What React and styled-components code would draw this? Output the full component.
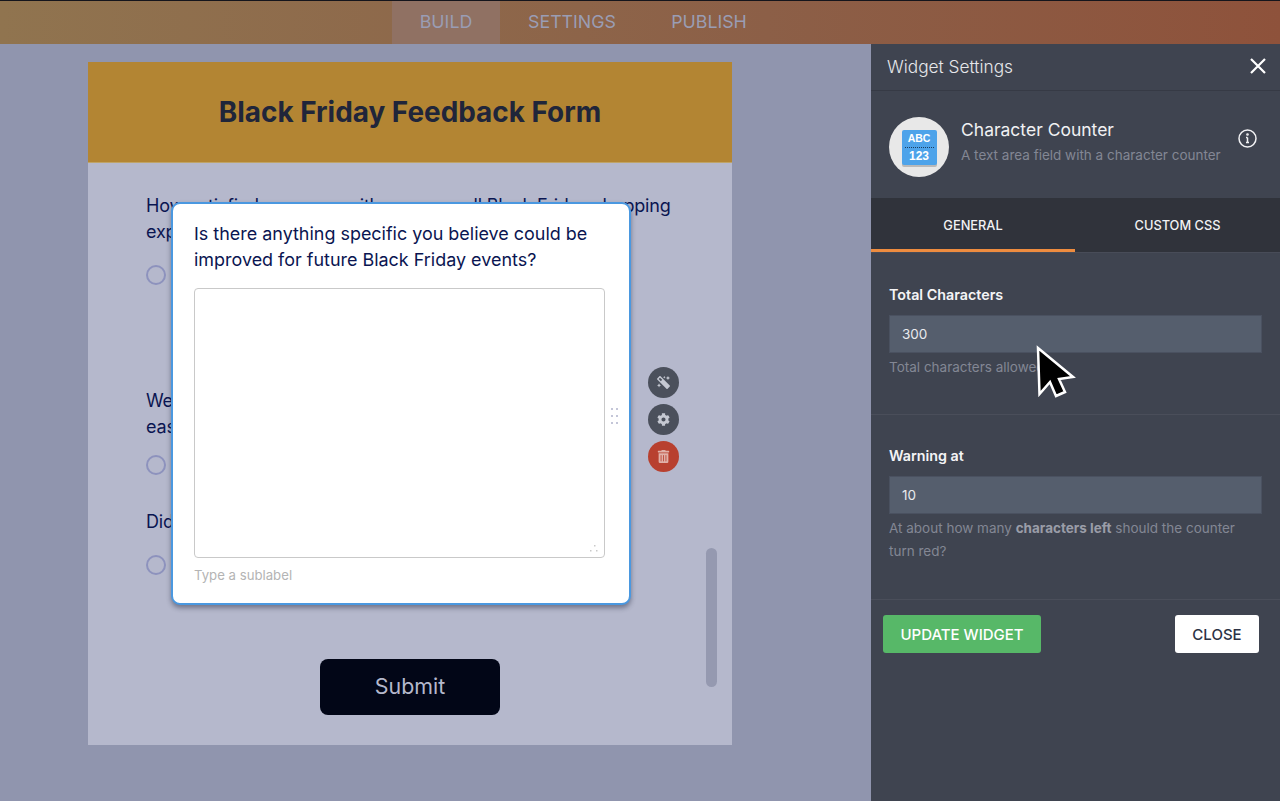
import React from "react";
import styled, { createGlobalStyle } from "styled-components";
import { FaMagic, FaCog, FaTrashAlt } from "react-icons/fa";

const GlobalStyle = createGlobalStyle`
  html, body {
    margin: 0;
    padding: 0;
    height: 100%;
    overflow: hidden;
    background: #9095ae;
    font-family: "Inter", "Liberation Sans", sans-serif;
  }
  * { box-sizing: border-box; }
`;

const questions = [
  {
    text: "How satisfied were you with your overall Black Friday shopping experience?",
    width: 527,
    radioGap: 20,
    gap: 103,
  },
  {
    text: "Were you able to find the items you wanted quickly and easily?",
    width: 480,
    radioGap: 15,
    gap: 34,
  },
  { text: "Did you use any discount codes?", width: 527, radioGap: 20, gap: 0 },
];

const Page = styled.div`
  width: 1280px;
  height: 801px;
  display: flex;
  flex-direction: column;
`;

const TopBar = styled.header`
  height: 44px;
  flex: none;
  padding-left: 392px;
  border-top: 1px solid #15151c;
  background: linear-gradient(90deg, #90744f 0%, #8c5f47 60%, #8e523b 100%);
  display: flex;
`;

const NavTab = styled.div`
  width: ${(p) => p.$width}px;
  padding-bottom: 3px;
  display: flex;
  align-items: center;
  justify-content: center;
  font-size: 17.8px;
  color: #9a9db4;
  background: ${(p) => (p.$active ? "#907163" : "transparent")};
`;

const Body = styled.div`
  flex: 1;
  display: flex;
  min-height: 0;
`;

const Canvas = styled.main`
  width: 871px;
  flex: none;
  padding: 18px 0 0 88px;
`;

const FormCard = styled.div`
  position: relative;
  width: 644px;
  height: 683px;
  background: #b5b8cc;
`;

const FormHeader = styled.div`
  height: 101px;
  background: #b38533;
  border-bottom: 1px solid #bfa468;
  display: flex;
  align-items: center;
  justify-content: center;
`;

const FormTitle = styled.h1`
  margin: 0;
  font-size: 27.9px;
  font-weight: 700;
  color: #20253a;
`;

const Questions = styled.div`
  padding: 30px 59px 0 58px;
`;

const Question = styled.div`
  margin-bottom: ${(p) => p.$gap}px;
`;

const QuestionLabel = styled.div`
  max-width: ${(p) => p.$width}px;
  font-size: 18px;
  line-height: 26px;
  letter-spacing: -0.2px;
  color: #0a1551;
`;

const Radio = styled.div`
  width: 20px;
  height: 20px;
  margin-top: ${(p) => p.$gap}px;
  border: 2px solid #8d92bd;
  border-radius: 50%;
`;

const SubmitButton = styled.button`
  position: absolute;
  left: 232px;
  top: 597px;
  width: 180px;
  height: 56px;
  padding: 0 0 2px;
  border: 0;
  border-radius: 8px;
  background: #020617;
  color: #b5b8cc;
  font: 400 21.4px "Inter", sans-serif;
`;

const Scrollbar = styled.div`
  position: absolute;
  left: 618px;
  top: 486px;
  width: 11px;
  height: 139px;
  border-radius: 6px;
  background: #9599b0;
`;

const Modal = styled.div`
  position: absolute;
  left: 83px;
  top: 140px;
  width: 460px;
  height: 403px;
  padding: 17px 21px 0;
  background: #fff;
  border: 2px solid #4a98e0;
  border-radius: 9px;
  box-shadow: 0 3px 5px rgba(30, 35, 60, 0.45);
`;

const ModalQuestion = styled.div`
  font-size: 17.95px;
  line-height: 26px;
  color: #0a1551;
`;

const AreaBox = styled.div`
  position: relative;
  width: 411px;
  height: 270px;
  margin-top: 15px;
  border: 1px solid #c9c9c9;
  border-radius: 4px;
`;

const ResizeGrip = styled.svg`
  position: absolute;
  right: 6px;
  bottom: 4px;
`;

const Sublabel = styled.div`
  margin-top: 9px;
  font-size: 13.2px;
  line-height: 16px;
  color: #b4b4b4;
`;

const DragHandle = styled.div`
  position: absolute;
  left: 438px;
  top: 204px;
  display: grid;
  grid-template-columns: 2px 2px;
  gap: 5px 3px;
`;

const DragDot = styled.span`
  width: 2px;
  height: 2px;
  background: #c4c6d8;
`;

const ActionStack = styled.div`
  position: absolute;
  left: 560px;
  top: 305px;
  display: flex;
  flex-direction: column;
  gap: 6px;
`;

const ActionButton = styled.div`
  width: 31px;
  height: 31px;
  border-radius: 50%;
  display: flex;
  align-items: center;
  justify-content: center;
  font-size: 13px;
  color: ${(p) => (p.$danger ? "#e0b0a8" : "#c5c8d2")};
  background: ${(p) => (p.$danger ? "#b8402f" : "#4b505c")};
`;

const WandIcon = styled(FaMagic)`
  transform: scaleX(-1);
`;

const Sidebar = styled.aside`
  position: relative;
  width: 409px;
  flex: none;
  background: #3f4450;
  color: #fff;
`;

const SidebarHeader = styled.div`
  height: 47px;
  padding: 0 12px 2px 16px;
  display: flex;
  align-items: center;
  justify-content: space-between;
  border-bottom: 1px solid #363a45;
`;

const SidebarTitle = styled.div`
  font-size: 17.3px;
  font-weight: 300;
  color: #e6e7ea;
`;

const WidgetRow = styled.div`
  height: 107px;
  padding: 26px 18px 0;
  display: flex;
  align-items: flex-start;
`;

const WidgetLogo = styled.div`
  width: 60px;
  height: 60px;
  flex: none;
  border-radius: 50%;
  background: #e8e8e8;
  display: flex;
  align-items: center;
  justify-content: center;
`;

const LogoTile = styled.div`
  width: 35px;
  height: 35px;
  border-radius: 2px;
  background: #4da3ea;
  box-shadow: 0 2px 0 #b9b9b9;
  color: #fff;
  font-family: "Liberation Sans", sans-serif;
  font-weight: 700;
  text-align: center;
`;

const LogoLine = styled.div`
  font-size: ${(p) => p.$size}px;
  line-height: ${(p) => p.$height}px;
`;

const LogoDots = styled.div`
  height: 1px;
  margin: 1px 3px 1px;
  border-top: 1px dotted #1c3d5e;
`;

const WidgetInfo = styled.div`
  flex: 1;
  margin: 2px 0 0 12px;
`;

const WidgetName = styled.div`
  font-size: 17.5px;
  line-height: 22px;
  color: #f1f1f3;
`;

const WidgetDesc = styled.div`
  margin-top: 6px;
  font-size: 13.5px;
  line-height: 16px;
  color: #838794;
`;

const InfoButton = styled.div`
  margin: 12px 5px 0 0;
  display: flex;
`;

const TabRow = styled.div`
  height: 55px;
  display: flex;
  background: #30333b;
  border-bottom: 1px solid #484c58;
`;

const SideTab = styled.div`
  height: 54px;
  width: ${(p) => p.$width}px;
  padding-top: 3px;
  display: flex;
  align-items: center;
  justify-content: center;
  font-size: 12.8px;
  font-weight: 500;
  color: #f2f2f4;
  border-bottom: 3px solid ${(p) => (p.$active ? "#ee8c3f" : "transparent")};
`;

const FieldSection = styled.section`
  height: ${(p) => p.$height}px;
  padding: ${(p) => p.$top}px 18px 0;
  border-bottom: 1px solid #4a4e5a;
`;

const FieldLabel = styled.div`
  font-size: 14.3px;
  line-height: 18px;
  font-weight: 600;
  color: #f4f4f6;
`;

const FieldInput = styled.div`
  width: 373px;
  height: 38px;
  margin-top: 11px;
  padding-left: 12px;
  display: flex;
  align-items: center;
  font-size: 13.5px;
  color: #e9eaee;
  background: #555e6d;
  border: 1px solid #4a5160;
`;

const FieldHelp = styled.div`
  margin-top: 3px;
  max-width: 360px;
  font-size: 13.5px;
  line-height: 23px;
  color: #838794;

  strong {
    font-weight: 700;
    color: #9a9da8;
  }
`;

const FooterRow = styled.div`
  padding: 15px 21px 0 12px;
  display: flex;
  justify-content: space-between;
`;

const UpdateButton = styled.button`
  width: 158px;
  height: 38px;
  border: 0;
  border-radius: 3px;
  background: #57b868;
  color: #fff;
  font: 500 15px "Inter", sans-serif;
`;

const CloseButton = styled.button`
  width: 84px;
  height: 38px;
  border: 0;
  border-radius: 3px;
  background: #fff;
  color: #2c3245;
  font: 500 15px "Inter", sans-serif;
`;

const Cursor = styled.svg`
  position: absolute;
  left: 163px;
  top: 299px;
`;

const App = () => (
  <Page>
    <GlobalStyle />
    <TopBar>
      <NavTab $width={108} $active>BUILD</NavTab>
      <NavTab $width={144}>SETTINGS</NavTab>
      <NavTab $width={130}>PUBLISH</NavTab>
    </TopBar>
    <Body>
      <Canvas>
        <FormCard>
          <FormHeader>
            <FormTitle>Black Friday Feedback Form</FormTitle>
          </FormHeader>
          <Questions>
            {questions.map((q) => (
              <Question key={q.text} $gap={q.gap}>
                <QuestionLabel $width={q.width}>{q.text}</QuestionLabel>
                <Radio $gap={q.radioGap} />
              </Question>
            ))}
          </Questions>
          <SubmitButton>Submit</SubmitButton>
          <Scrollbar />
          <Modal>
            <ModalQuestion>
              Is there anything specific you believe could be improved for future Black Friday events?
            </ModalQuestion>
            <AreaBox>
              <ResizeGrip width="9" height="8" viewBox="0 0 9 8" fill="#c9c9c9">
                <rect x="5" y="0" width="1.5" height="1.5" />
                <rect x="1" y="5" width="1.5" height="1.5" />
                <rect x="7" y="5" width="1.5" height="1.5" />
              </ResizeGrip>
            </AreaBox>
            <Sublabel>Type a sublabel</Sublabel>
            <DragHandle>
              {[0, 1, 2, 3, 4, 5].map((i) => (
                <DragDot key={i} />
              ))}
            </DragHandle>
          </Modal>
          <ActionStack>
            <ActionButton><WandIcon /></ActionButton>
            <ActionButton><FaCog /></ActionButton>
            <ActionButton $danger><FaTrashAlt /></ActionButton>
          </ActionStack>
        </FormCard>
      </Canvas>
      <Sidebar>
        <SidebarHeader>
          <SidebarTitle>Widget Settings</SidebarTitle>
          <svg width="20" height="20" viewBox="0 0 20 20" fill="none" stroke="#fff" strokeWidth="2.2">
            <path d="M3 3l14 14M17 3L3 17" />
          </svg>
        </SidebarHeader>
        <WidgetRow>
          <WidgetLogo>
            <LogoTile>
              <LogoLine $size={10.5} $height={16}>ABC</LogoLine>
              <LogoDots />
              <LogoLine $size={12} $height={14}>123</LogoLine>
            </LogoTile>
          </WidgetLogo>
          <WidgetInfo>
            <WidgetName>Character Counter</WidgetName>
            <WidgetDesc>A text area field with a character counter</WidgetDesc>
          </WidgetInfo>
          <InfoButton>
            <svg width="19" height="19" viewBox="0 0 19 19" fill="none" stroke="#f2f2f4" strokeWidth="1.5">
              <circle cx="9.5" cy="9.5" r="8.5" />
              <path d="M9.5 8.5v5M8 13.5h3M8 8.5h1.5" />
              <circle cx="9.5" cy="5.5" r="0.6" />
            </svg>
          </InfoButton>
        </WidgetRow>
        <TabRow>
          <SideTab $width={204} $active>GENERAL</SideTab>
          <SideTab $width={205}>CUSTOM CSS</SideTab>
        </TabRow>
        <FieldSection $height={162} $top={33}>
          <FieldLabel>Total Characters</FieldLabel>
          <FieldInput>300</FieldInput>
          <FieldHelp>Total characters allowed</FieldHelp>
        </FieldSection>
        <FieldSection $height={185} $top={32}>
          <FieldLabel>Warning at</FieldLabel>
          <FieldInput>10</FieldInput>
          <FieldHelp>
            At about how many <strong>characters left</strong> should the counter turn red?
          </FieldHelp>
        </FieldSection>
        <FooterRow>
          <UpdateButton>UPDATE WIDGET</UpdateButton>
          <CloseButton>CLOSE</CloseButton>
        </FooterRow>
        <Cursor width="46" height="58" viewBox="0 0 46 58">
          <path
            d="M4 5L5.5 51 16 39l6 14 9-4-6-13 14-2z"
            fill="#000"
            stroke="#fff"
            strokeWidth="2.5"
            strokeLinejoin="miter"
          />
        </Cursor>
      </Sidebar>
    </Body>
  </Page>
);

export default App;
